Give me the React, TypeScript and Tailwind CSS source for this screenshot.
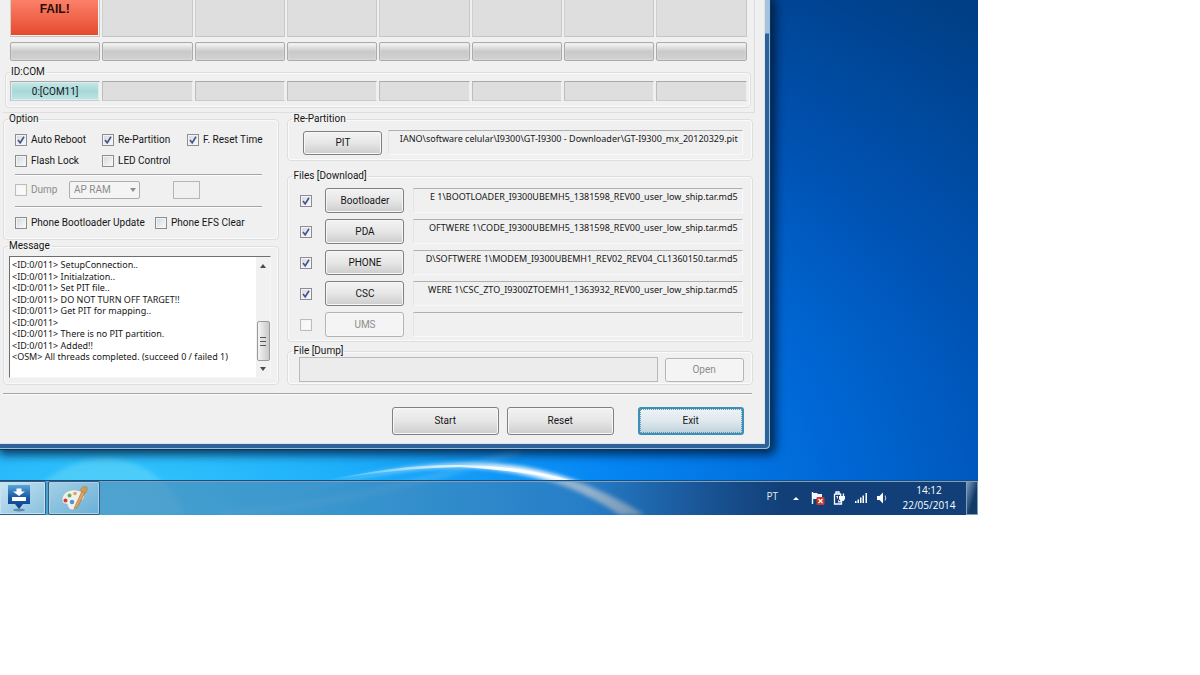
import React, { useState } from 'react';
import type { ReactNode } from 'react';

interface FileRow {
  label: string;
  path: string;
  enabled: boolean;
}

const FILES: FileRow[] = [
  { label: 'Bootloader', path: 'E 1\\BOOTLOADER_I9300UBEMH5_1381598_REV00_user_low_ship.tar.md5', enabled: true },
  { label: 'PDA', path: 'OFTWERE 1\\CODE_I9300UBEMH5_1381598_REV00_user_low_ship.tar.md5', enabled: true },
  { label: 'PHONE', path: 'D\\SOFTWERE 1\\MODEM_I9300UBEMH1_REV02_REV04_CL1360150.tar.md5', enabled: true },
  { label: 'CSC', path: 'WERE 1\\CSC_ZTO_I9300ZTOEMH1_1363932_REV00_user_low_ship.tar.md5', enabled: true },
  { label: 'UMS', path: '', enabled: false },
];

const MESSAGES = [
  '<ID:0/011> SetupConnection..',
  '<ID:0/011> Initialzation..',
  '<ID:0/011> Set PIT file..',
  '<ID:0/011> DO NOT TURN OFF TARGET!!',
  '<ID:0/011> Get PIT for mapping..',
  '<ID:0/011>',
  '<ID:0/011> There is no PIT partition.',
  '<ID:0/011> Added!!',
  '<OSM> All threads completed. (succeed 0 / failed 1)',
];

const SLOTS = [0, 1, 2, 3, 4, 5, 6, 7];

interface GroupProps {
  title: string;
  className?: string;
  bodyClassName?: string;
  children: ReactNode;
}

function Group({ title, className = '', bodyClassName = '', children }: GroupProps) {
  return (
    <fieldset className={`min-w-0 rounded-sm border border-[#dcdfe2] shadow-[inset_0_0_0_1px_#fafafa] ${className}`}>
      <legend className="ml-1 h-3 px-px leading-3">{title}</legend>
      <div className={bodyClassName}>{children}</div>
    </fieldset>
  );
}

interface CheckProps {
  label: string;
  checked?: boolean;
  disabled?: boolean;
  hideLabel?: boolean;
  className?: string;
}

function Check({ label, checked = false, disabled = false, hideLabel = false, className = '' }: CheckProps) {
  const [on, setOn] = useState(checked);
  return (
    <label className={`flex h-[13px] items-center gap-1 whitespace-nowrap ${disabled ? 'text-[#8c8c8c]' : ''} ${className}`}>
      <span className="grid h-3 w-3 shrink-0">
        <input
          type="checkbox"
          checked={on}
          disabled={disabled}
          aria-label={hideLabel ? label : undefined}
          onChange={() => setOn(!on)}
          className="peer col-start-1 row-start-1 h-3 w-3 appearance-none border border-[#8b8d90] bg-linear-to-br from-[#d4d7dc] to-[#fbfbfb] shadow-[inset_0_0_0_1px_#f4f4f4] disabled:border-[#bcbcbc] disabled:from-[#f6f6f6]"
        />
        <svg viewBox="0 0 12 12" className="pointer-events-none invisible col-start-1 row-start-1 h-3 w-3 peer-checked:visible">
          <path d="M3 6 L5.2 8.8 L9 2.8" fill="none" stroke="#44548f" strokeWidth="1.6" />
        </svg>
      </span>
      {!hideLabel && <span>{label}</span>}
    </label>
  );
}

function WinButton({ className = '', children, disabled }: { className?: string; children: ReactNode; disabled?: boolean }) {
  return (
    <button
      type="button"
      disabled={disabled}
      className={`shrink-0 rounded-[3px] border border-[#808080] bg-linear-to-b from-[#f3f3f3] from-0% via-[#e6e6e6] via-50% to-[#cdcdcd] shadow-[inset_0_0_0_1px_#f7f7f7] disabled:border-[#b4b4b4] disabled:from-[#f4f4f4] disabled:via-[#f4f4f4] disabled:to-[#f4f4f4] disabled:text-[#8c8c8c] ${className}`}
    >
      {children}
    </button>
  );
}

// keeps the end of a long path in view, the file name matters more than the folder
const showEnd = (el: HTMLInputElement | null) => {
  if (el) el.scrollLeft = el.scrollWidth;
};

function PathField({ label, path }: { label: string; path: string }) {
  return (
    <div className="h-[25px] min-w-0 flex-1 border border-t-[#b0b0b0] border-r-[#fafafa] border-b-[#f8f8f8] border-l-[#e4e4e4] px-1">
      <input
        ref={showEnd}
        aria-label={label}
        readOnly
        value={path}
        className="block h-4 w-full bg-transparent text-right font-['Noto_Sans',sans-serif] text-[9px] leading-4 outline-none"
      />
    </div>
  );
}

function Rule() {
  return <hr className="h-[2px] border-t border-b border-t-[#a6a6a6] border-b-[#fbfbfb]" />;
}

function Slots() {
  return (
    <>
      <div className="mx-[7px] grid grid-cols-8 gap-[2px]">
        {SLOTS.map((i) => (
          <div key={i} className="h-[37px] border border-t-0 border-l-[#cfcfcf] border-r-[#c8c8c8] border-b-[#c4c4c4] bg-[#dedede]">
            {i === 0 && (
              <div className="h-9 border-r border-b border-[#f4f4f4] bg-linear-to-b from-[#fb8069] to-[#e6492b] pt-px text-center font-['Liberation_Sans',sans-serif] text-[12px] leading-4 font-bold text-[#2a0d08]">
                FAIL!
              </div>
            )}
          </div>
        ))}
      </div>
      <div className="mx-[7px] mt-[5px] grid grid-cols-8 gap-[2px]">
        {SLOTS.map((i) => (
          <div
            key={i}
            className="h-[19px] rounded-[2px] border border-[#ababab] bg-linear-to-b from-[#f0f0f0] from-10% via-[#c9c9c9] via-50% to-[#d2d2d2] shadow-[inset_0_0_2px_#e8e8e8]"
          />
        ))}
      </div>
      <Group title="ID:COM" className="mt-[5px] mr-[3px] ml-[2px]" bodyClassName="pt-[3px] pr-[3px] pb-[6px] pl-1">
        <div className="grid grid-cols-8 gap-[2px]">
          {SLOTS.map((i) => (
            <div key={i} className="h-5 border border-t-[#a9a9a9] border-r-[#f0f0f0] border-b-[#cbcbcb] border-l-[#bdbdbd] bg-[#dedede]">
              {i === 0 && (
                <div className="h-[18px] border border-[#d8efee] bg-linear-to-b from-[#c5e6e5] via-[#a5d8da] to-[#bde3e3] text-center leading-[18px]">
                  0:[COM11]
                </div>
              )}
            </div>
          ))}
        </div>
      </Group>
    </>
  );
}

function OptionGroup() {
  return (
    <Group title="Option" bodyClassName="pt-2 pr-4 pb-[10px] pl-[11px]">
      <div className="grid grid-cols-[87px_85px_1fr] gap-y-2">
        <Check label="Auto Reboot" checked />
        <Check label="Re-Partition" checked />
        <Check label="F. Reset Time" checked />
        <Check label="Flash Lock" />
        <Check label="LED Control" />
      </div>
      <div className="mt-[7px]">
        <Rule />
      </div>
      <div className="mt-[5px] flex items-center">
        <Check label="Dump" disabled className="w-[54px]" />
        <div className="grid w-[71px]">
          <select
            aria-label="Dump source"
            disabled
            className="col-start-1 row-start-1 h-[18px] appearance-none rounded-[2px] border border-[#adadad] bg-[#f4f4f4] px-1 text-[#8c8c8c] opacity-100"
          >
            <option>AP RAM</option>
          </select>
          <svg viewBox="0 0 6 4" className="pointer-events-none col-start-1 row-start-1 mr-1 h-1 w-[6px] self-center justify-self-end">
            <path d="M0 0h6L3 4z" fill="#8e8e8e" />
          </svg>
        </div>
        <input aria-label="Dump size" disabled className="ml-[33px] h-[18px] w-[27px] border border-[#b5b5b5] bg-[#f0f0f0]" />
      </div>
      <div className="mt-[7px]">
        <Rule />
      </div>
      <div className="mt-2 grid grid-cols-[140px_1fr]">
        <Check label="Phone Bootloader Update" />
        <Check label="Phone EFS Clear" />
      </div>
    </Group>
  );
}

function MessageGroup() {
  return (
    <Group title="Message" bodyClassName="pt-1 pr-[7px] pb-[6px] pl-[5px]">
      <div className="flex h-[122px] justify-between border border-t-[#6f6f6f] border-r-[#f6f6f6] border-b-[#f6f6f6] border-l-[#6f6f6f] bg-white">
        <ul className="mt-[2px] flex h-[103px] min-w-0 flex-col justify-between pl-[2px] font-['Noto_Sans',sans-serif] text-[9px] whitespace-nowrap">
          {MESSAGES.map((line) => (
            <li key={line} className="leading-[11px]">{line}</li>
          ))}
        </ul>
        <div className="flex w-[14px] shrink-0 flex-col items-center bg-[#f1f1f1] py-1">
          <svg viewBox="0 0 6 4" className="mt-[3px] h-1 w-[6px]">
            <path d="M0 4h6L3 0z" fill="#4a4a4a" />
          </svg>
          <div className="mt-auto flex h-10 w-[13px] flex-col items-center justify-center gap-px rounded-[2px] border border-[#9a9a9a] bg-linear-to-r from-[#f5f5f5] to-[#c9c9c9]">
            <span className="h-px w-[6px] bg-[#555]" />
            <span className="h-px w-[6px] bg-[#ddd]" />
            <span className="h-px w-[6px] bg-[#555]" />
            <span className="h-px w-[6px] bg-[#ddd]" />
            <span className="h-px w-[6px] bg-[#555]" />
          </div>
          <svg viewBox="0 0 6 4" className="mt-[6px] mb-[2px] h-1 w-[6px]">
            <path d="M0 0h6L3 4z" fill="#4a4a4a" />
          </svg>
        </div>
      </div>
    </Group>
  );
}

function FilesColumn() {
  return (
    <div>
      <Group title="Re-Partition" bodyClassName="pt-[5px] pr-[9px] pb-[5px] pl-[15px]">
        <div className="flex items-end gap-[6px]">
          <WinButton className="h-6 w-[79px]">PIT</WinButton>
          <PathField label="PIT path" path="IANO\software celular\I9300\GT-I9300 - Downloader\GT-I9300_mx_20120329.pit" />
        </div>
      </Group>
      <Group title="Files [Download]" className="mt-[9px]" bodyClassName="pt-[6px] pr-[9px] pb-1 pl-3">
        <div className="flex flex-col gap-[6px]">
          {FILES.map((file) => (
            <div key={file.label} className="flex items-center">
              <Check label={`Use ${file.label}`} checked={file.enabled} disabled={!file.enabled} hideLabel className="w-[25px]" />
              <WinButton className="mr-[9px] h-[25px] w-[79px]" disabled={!file.enabled}>
                {file.label}
              </WinButton>
              <PathField label={`${file.label} path`} path={file.path} />
            </div>
          ))}
        </div>
      </Group>
      <Group title="File [Dump]" className="mt-[3px]" bodyClassName="pr-2 pb-[2px] pl-[11px]">
        <div className="flex items-center gap-[7px]">
          <input aria-label="Dump file" disabled className="h-[25px] min-w-0 flex-1 border border-[#b9b9b9] bg-[#ececec]" />
          <WinButton className="h-6 w-[79px]" disabled>
            Open
          </WinButton>
        </div>
      </Group>
    </div>
  );
}

function Wallpaper() {
  return (
    <svg viewBox="0 0 978 515" preserveAspectRatio="none" className="absolute inset-0 h-full w-full">
      <defs>
        <filter id="glow" x="-10%" y="-50%" width="120%" height="200%">
          <feGaussianBlur stdDeviation="2" />
        </filter>
        <linearGradient id="beam" x1="320" y1="0" x2="650" y2="0" gradientUnits="userSpaceOnUse">
          <stop offset="0" stopColor="#8fe0ff" stopOpacity="0.2" />
          <stop offset="0.45" stopColor="#ffffff" stopOpacity="0.9" />
          <stop offset="0.75" stopColor="#ffffff" />
          <stop offset="1" stopColor="#ffffff" />
        </linearGradient>
      </defs>
      <path d="M10 515 Q60 455 110 458 Q160 462 185 515Z" fill="#a5f0f5" opacity="0.25" filter="url(#glow)" />
      <path d="M300 490 Q400 462 470 463 Q560 462 645 515 L620 515 Q560 473 470 467 Q400 466 300 492Z" fill="url(#beam)" filter="url(#glow)" />
      <path d="M330 480 Q400 464 460 465 Q520 465 575 482 Q520 470 460 467 Q400 468 330 480Z" fill="url(#beam)" />
      <path d="M220 515 Q380 500 520 450" fill="none" stroke="#8fd4ff" strokeWidth="8" opacity="0.2" filter="url(#glow)" />
    </svg>
  );
}

function DownloaderIcon() {
  return (
    <svg viewBox="0 0 24 28" className="h-7 w-6">
      <defs>
        <linearGradient id="dl" x1="0" y1="0" x2="0" y2="1">
          <stop offset="0" stopColor="#5aa6d8" />
          <stop offset="0.5" stopColor="#1a5ca6" />
          <stop offset="1" stopColor="#0d3c86" />
        </linearGradient>
      </defs>
      <ellipse cx="12" cy="26" rx="6" ry="1.4" fill="#2b5577" opacity="0.55" />
      <path d="M1 1h22v19h-7l-4 5-4-5H1z" fill="url(#dl)" />
      <path d="M9.5 4.500h5V7.500H18l-6 4.500-6-4.500h3.500z" fill="#fff" />
      <path d="M5 13h14v4H5z" fill="#fff" />
    </svg>
  );
}

function PaintIcon() {
  return (
    <svg viewBox="0 0 28 26" className="h-[26px] w-7">
      <path d="M2 15C2 8 9 4 16 5c6 1 9 4 8 8-1 3-5 2-6 4s1 5-3 7-6 0-7-2 0-3-2-3-4-1-4-4z" fill="#edf0ec" stroke="#9aabb4" strokeWidth="0.7" />
      <circle cx="5.500" cy="15.500" r="2" fill="#c9403c" />
      <circle cx="9.500" cy="10.500" r="2" fill="#6fae50" />
      <circle cx="15" cy="8.500" r="1.800" fill="#e0a455" />
      <circle cx="12" cy="17" r="2.200" fill="#4a96cf" />
      <path d="M22 6 L14 23.500 L17 23 L25 7.500z" fill="#e2a25c" stroke="#a86f38" strokeWidth="0.6" />
      <path d="M20.500 4.500q2-4 6.500-2.500q1 3-1.500 6q-3 0-5-3.500z" fill="#d09a5c" stroke="#a47534" strokeWidth="0.5" />
    </svg>
  );
}

function TrayIcons() {
  return (
    <>
      <button type="button" aria-label="Show hidden icons" className="ml-[15px]">
        <svg viewBox="0 0 6 3" className="h-[3px] w-[6px]">
          <path d="M0 3h6L3 0z" fill="#fff" />
        </svg>
      </button>
      <svg viewBox="0 0 14 14" className="ml-3 h-[14px] w-[14px]">
        <path d="M1.500 1v12" stroke="#fff" strokeWidth="1.400" />
        <path d="M2 2h4l1 1h4v6H7L6 8H2z" fill="#f2f5f8" />
        <rect x="5.500" y="6" width="8" height="8" rx="1" fill="#d3352b" />
        <path d="M7.500 8l4 4M11.500 8l-4 4" stroke="#fff" strokeWidth="1.200" />
      </svg>
      <svg viewBox="0 0 13 14" className="ml-2 h-[14px] w-[13px]">
        <path d="M3 2.500V1h3v1.500M1.500 3h6M1.500 3v10h7V10" fill="none" stroke="#fff" strokeWidth="1.300" />
        <path d="M3 5h2v6.500h4V10H6z" fill="#e8eef5" />
        <path d="M6 5h6v3l-1.500 2h-3L6 8zM7 2.500h1.300V5H7zM9.800 2.500h1.300V5H9.800z" fill="#fff" />
      </svg>
      <svg viewBox="0 0 14 12" className="ml-2 h-3 w-[14px]">
        <path d="M1 9h1.500v2H1zM3.500 7.500H5V11H3.500zM6 5.500h1.500V11H6zM8.500 3.500H10V11H8.500zM11.500 1H13v10h-1.500z" fill="#fff" />
      </svg>
      <svg viewBox="0 0 12 14" className="ml-2 h-[14px] w-3">
        <path d="M1 5h2.500L7 1.500v11L3.500 9H1z" fill="#fff" />
        <path d="M9 4.500q1.600 2.500 0 5" fill="none" stroke="#b8cce0" strokeWidth="1.100" />
      </svg>
    </>
  );
}

function Taskbar() {
  return (
    <footer className="relative flex h-[35px] items-stretch border-t border-[#1f4c78] bg-linear-to-r from-[#5096c3]/75 from-0% via-[#3f74a4]/55 via-60% to-[#123f78] to-80% font-['Open_Sans','Noto_Sans',sans-serif] text-[10px] text-white shadow-[inset_0_1px_0_#6fa6cf]">
      <button
        type="button"
        aria-label="Downloader"
        className="flex w-[46px] items-center justify-center rounded-r-[2px] border border-l-0 border-[#2f5f88] bg-linear-to-br from-[#d6ecf5]/90 to-[#8fc4e0]/90 pr-2 shadow-[inset_0_0_0_1px_#c4e2f1]"
      >
        <DownloaderIcon />
      </button>
      <button
        type="button"
        aria-label="Paint"
        className="ml-[2px] flex w-[52px] items-center justify-center rounded-[2px] border border-[#2f5f88] bg-linear-to-br from-[#b9dcec]/80 to-[#6fb2d9]/80 shadow-[inset_0_0_0_1px_#a7d3e9]"
      >
        <PaintIcon />
      </button>
      <div className="ml-auto flex items-center">
        <span className="pb-1 text-[#dfe9f3]">PT</span>
        <TrayIcons />
        <time dateTime="2014-05-22T14:12" className="ml-[11px] w-[60px] text-center leading-[15px]">
          14:12
          <br />
          22/05/2014
        </time>
        <button type="button" aria-label="Show desktop" className="ml-[7px] h-full w-3 border border-[#7f9dba] bg-linear-to-br from-[#7c9cbd] to-[#123a68] to-60%" />
      </div>
    </footer>
  );
}

export default function App() {
  return (
    <main className="min-h-screen bg-white">
      <div className="relative w-[81.5%] overflow-hidden bg-[radial-gradient(ellipse_105%_115%_at_12%_100%,#35c8fb_0%,#1fb0fa_22%,#0586f3_48%,#0068d6_70%,#0052b2_90%,#003f86_118%)]">
        <Wallpaper />
        <div className="relative w-[78.8%] rounded-br-[5px] border-r border-b border-[#17324f] bg-linear-to-b from-[#a9c2da] from-0% via-[#a9c2da] via-[33px] to-[#2d6399] to-[34px] pr-[5px] pb-[5px] shadow-[inset_-1px_-1px_0_#8fc0e8,2px_2px_10px_3px_rgba(0,20,50,0.75)]">
          <div className="border-r border-b border-[#d8e6f2] bg-[#f0f0f0] pb-2 pl-[3px] font-['Roboto',sans-serif] text-[10px] leading-3 text-[#161616]">
            <div className="mr-[9px] border-r border-b border-[#dcdfe2]">
              <Slots />
              <div className="h-1" />
            </div>
            <div className="mr-[11px] grid grid-cols-[277fr_466fr] gap-2">
              <div>
                <OptionGroup />
                <MessageGroup />
              </div>
              <FilesColumn />
            </div>
            <div className="mt-2 mr-3">
              <Rule />
            </div>
            <div className="mt-3 mr-5 flex justify-end">
              <WinButton className="h-7 w-[107px]">Start</WinButton>
              <WinButton className="ml-2 h-7 w-[107px]">Reset</WinButton>
              <button
                type="button"
                className="ml-6 h-7 w-[106px] rounded-[3px] border-2 border-[#3d8fb5] bg-linear-to-b from-[#eef3f6] via-[#dfe8ed] to-[#bfd2dc] p-0"
              >
                <span className="flex h-full items-center justify-center border border-dotted border-[#5a9cba]">Exit</span>
              </button>
            </div>
          </div>
        </div>
        <div className="h-[30px]" />
        <Taskbar />
      </div>
    </main>
  );
}
